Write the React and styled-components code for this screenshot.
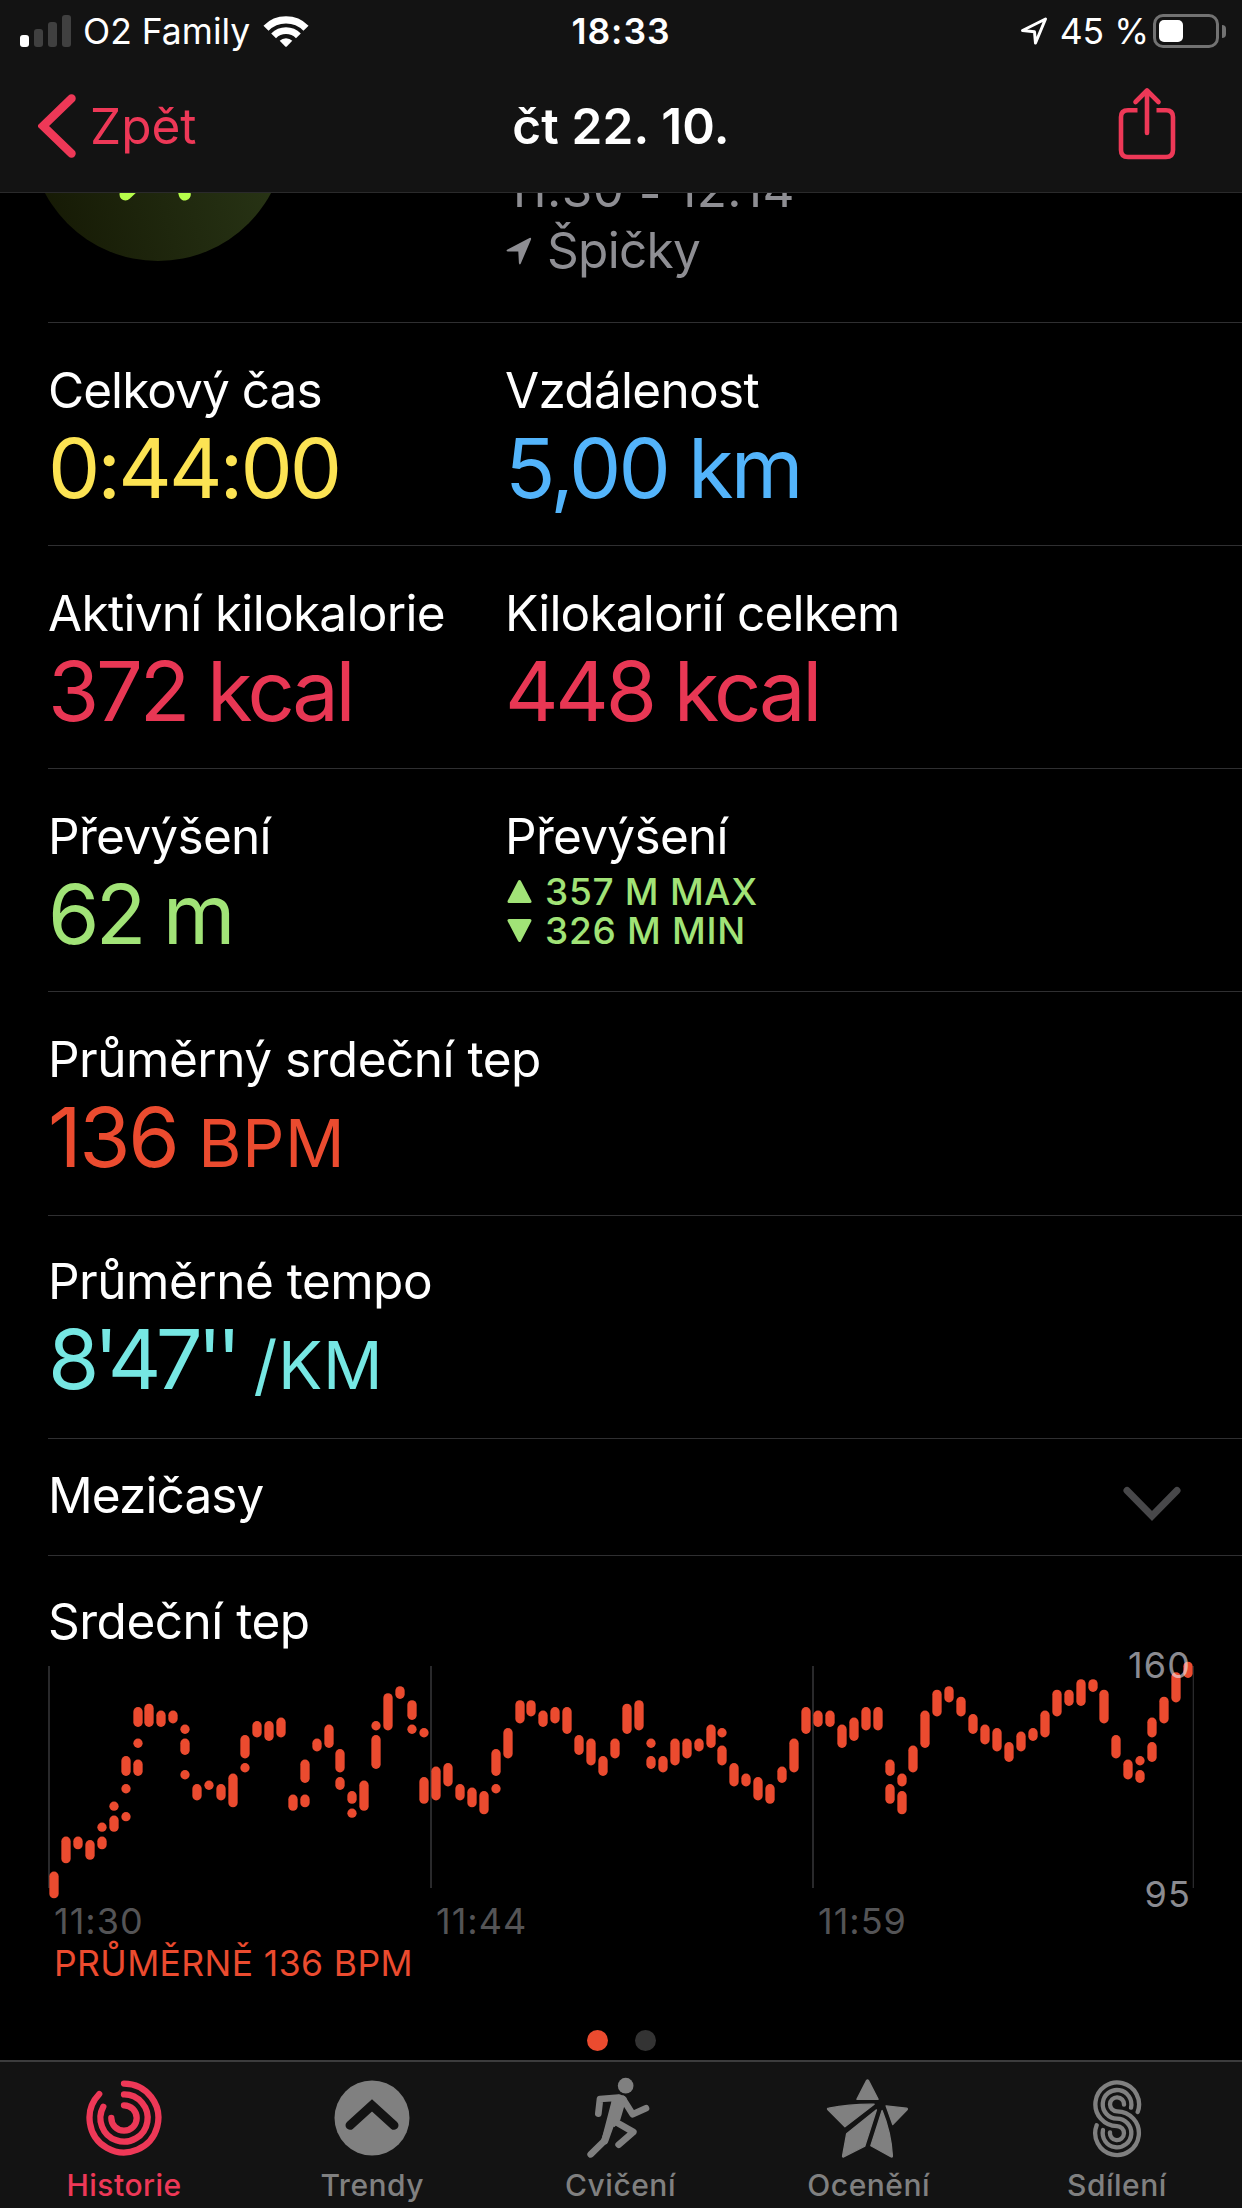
import styled, { createGlobalStyle } from "styled-components";

const HEART_RATE = [
  [[100, 95]],
  [[110, 105]],
  [[110, 109]],
  [[109, 106]],
  [[114, 114], [110, 109]],
  [[120, 120], [116, 114]],
  [[133, 130], [125, 125], [117, 117]],
  [[147, 144], [138, 138], [132, 130]],
  [[148, 144]],
  [[146, 144]],
  [[146, 145]],
  [[142, 142], [138, 136], [129, 129]],
  [[125, 123]],
  [[126, 126]],
  [[125, 123]],
  [[128, 121]],
  [[139, 135], [131, 131]],
  [[143, 141]],
  [[143, 140]],
  [[144, 141]],
  [[122, 120]],
  [[132, 128], [122, 121]],
  [[138, 137]],
  [[142, 138]],
  [[135, 131], [127, 126]],
  [[123, 122], [118, 118]],
  [[126, 120]],
  [[143, 143], [139, 132]],
  [[151, 143]],
  [[153, 152]],
  [[149, 146], [142, 142]],
  [[141, 141], [127, 122]],
  [[130, 123]],
  [[131, 127]],
  [[125, 123]],
  [[124, 121]],
  [[123, 119]],
  [[135, 130], [125, 125]],
  [[141, 135]],
  [[149, 145]],
  [[149, 147]],
  [[146, 144]],
  [[147, 145]],
  [[147, 142]],
  [[139, 136]],
  [[138, 133]],
  [[133, 130]],
  [[138, 135]],
  [[148, 142]],
  [[149, 143]],
  [[138, 138], [133, 132]],
  [[133, 131]],
  [[138, 133]],
  [[138, 135]],
  [[138, 137]],
  [[142, 138]],
  [[141, 141], [136, 133]],
  [[131, 127]],
  [[128, 127]],
  [[127, 123]],
  [[125, 122]],
  [[130, 128]],
  [[138, 131]],
  [[147, 142]],
  [[146, 144]],
  [[146, 144]],
  [[142, 138]],
  [[144, 140]],
  [[147, 143]],
  [[147, 143]],
  [[132, 130], [125, 122]],
  [[128, 127], [123, 119]],
  [[136, 131]],
  [[146, 138]],
  [[152, 147]],
  [[153, 151]],
  [[150, 147]],
  [[145, 142]],
  [[142, 139]],
  [[141, 137]],
  [[137, 134]],
  [[140, 137]],
  [[141, 140]],
  [[146, 141]],
  [[152, 147]],
  [[152, 150]],
  [[155, 150]],
  [[155, 154]],
  [[152, 145]],
  [[139, 135]],
  [[132, 129]],
  [[133, 133], [129, 128]],
  [[144, 141], [137, 134]],
  [[150, 145]],
  [[157, 151]],
  [[160, 158]],
];

export default function App() {
  return (
    <>
      <GlobalStyle />
      <Screen>
        <Header>
          <StatusBar />
          <NavBar>
            <BackButton>
              <svg width="38" height="64" viewBox="0 0 38 64">
                <path
                  d="M33.5 4.5L5 32l28.500 27.500"
                  fill="none"
                  stroke="currentColor"
                  strokeWidth="8.500"
                  strokeLinecap="round"
                />
              </svg>
              <span>Zpět</span>
            </BackButton>
            <NavTitle>čt 22. 10.</NavTitle>
            <ShareButton aria-label="Sdílet">
              <ShareIcon />
            </ShareButton>
          </NavBar>
        </Header>

        <Content>
          <Summary>
            <Badge>
              <svg width="256" height="256" viewBox="0 0 256 256">
                <path
                  d="M115 171L95.500 189.500M150 171L154.800 189.500"
                  stroke="#b6fd4b"
                  strokeWidth="12"
                  strokeLinecap="round"
                />
              </svg>
            </Badge>
            <SummaryText>
              <Time>
                11:30 <Dash>-</Dash> 12:14
              </Time>
              <Place>
                <svg width="26" height="28" viewBox="0 0 26 28">
                  <path
                    d="M1.500 12.600L23.500 1Q25.600 0.300 25 2.500L14.800 26.500Q13.500 28.600 12.900 26L12.300 14.600L2 14.600Q-0.600 14 1.500 12.600Z"
                    fill="currentColor"
                  />
                </svg>
                Špičky
              </Place>
            </SummaryText>
          </Summary>

          <Row>
            <Stat
              label="Celkový čas"
              labelSpacing="-0.95px"
              color="#fce353"
            >
              0:44:00
            </Stat>
            <Stat label="Vzdálenost" color="#53b4fb">
              5,00 km
            </Stat>
          </Row>
          <Row>
            <Stat label="Aktivní kilokalorie" color="#e83754" spacing="-3.3px">
              372 kcal
            </Stat>
            <Stat
              label="Kilokalorií celkem"
              labelSpacing="-0.8px"
              color="#e83754"
              spacing="-3.3px"
            >
              448 kcal
            </Stat>
          </Row>
          <Row>
            <Stat label="Převýšení" color="#a1e377" spacing="-3.6px">
              62 m
            </Stat>
            <Cell>
              <Label>Převýšení</Label>
              <Extremes>
                <li>
                  <Triangle />
                  357 M MAX
                </li>
                <li>
                  <Triangle $down />
                  326 M MIN
                </li>
              </Extremes>
            </Cell>
          </Row>
          <Row $height="224px">
            <Stat
              label="Průměrný srdeční tep"
              labelSpacing="-0.5px"
              color="#eb4b2f"
              spacing="-2.4px"
            >
              136 <Unit>BPM</Unit>
            </Stat>
          </Row>
          <Row $top="35px">
            <Stat
              label="Průměrné tempo"
              labelSpacing="-0.5px"
              color="#76e7e3"
              spacing="-5.6px"
            >
              8'47'' <Unit>/KM</Unit>
            </Stat>
          </Row>
          <SplitsRow>
            <Label $spacing="-0.9px">Mezičasy</Label>
            <Chevron width="58" height="36" viewBox="0 0 58 36">
              <path
                d="M4 4.500L29 30L54 4.500"
                fill="none"
                stroke="#48484a"
                strokeWidth="7"
                strokeLinecap="round"
              />
            </Chevron>
          </SplitsRow>

          <ChartSection>
            <Label $spacing="-0.5px">Srdeční tep</Label>
            <Chart>
              <HeartRateChart />
              <MaxLabel>160</MaxLabel>
              <MinLabel>95</MinLabel>
            </Chart>
            <TimeAxis>
              <span>11:30</span>
              <span>11:44</span>
              <span>11:59</span>
            </TimeAxis>
            <Average>PRŮMĚRNĚ 136 BPM</Average>
          </ChartSection>
          <Pager>
            <Dot $active />
            <Dot />
          </Pager>
        </Content>

        <TabBar>
          <Tab $active>
            <HistoryIcon />
            Historie
          </Tab>
          <Tab>
            <TrendsIcon />
            Trendy
          </Tab>
          <Tab>
            <WorkoutIcon />
            Cvičení
          </Tab>
          <Tab>
            <AwardsIcon />
            Ocenění
          </Tab>
          <Tab>
            <SharingIcon />
            Sdílení
          </Tab>
        </TabBar>
      </Screen>
    </>
  );
}

function StatusBar() {
  return (
    <StyledStatusBar>
      <StatusGroup>
        <Signal>
          <SignalBar $height="12px" $on />
          <SignalBar $height="18px" />
          <SignalBar $height="25px" />
          <SignalBar $height="32px" />
        </Signal>
        <Carrier>O2 Family</Carrier>
        <svg width="46" height="34" viewBox="0 0 46 34">
          <g fill="none" stroke="#fff">
            <path d="M3 14.200A28.300 28.300 0 0 1 43 14.200" strokeWidth="7.200" />
            <path d="M10.600 21.800A17.500 17.500 0 0 1 35.400 21.800" strokeWidth="6.800" />
          </g>
          <path
            d="M16.700 26.700A9 9 0 0 1 29.300 26.700L24 32.300Q23 33.300 22 32.300Z"
            fill="#fff"
          />
        </svg>
      </StatusGroup>
      <Clock>18:33</Clock>
      <StatusGroup $end>
        <svg width="30" height="30" viewBox="0 0 30 30">
          <path
            d="M3.500 14.500L26.500 3L16.500 27L15.500 15.800Z"
            fill="none"
            stroke="#fff"
            strokeWidth="3"
            strokeLinejoin="round"
          />
        </svg>
        <Percent>45 %</Percent>
        <Battery>
          <BatteryLevel />
        </Battery>
        <BatteryCap />
      </StatusGroup>
    </StyledStatusBar>
  );
}

function Stat({ label, labelSpacing, color, spacing, children }) {
  return (
    <Cell>
      <Label $spacing={labelSpacing}>{label}</Label>
      <Value $color={color} $spacing={spacing}>
        {children}
      </Value>
    </Cell>
  );
}

function Triangle({ $down }) {
  return (
    <svg width="25" height="25" viewBox="0 0 25 25">
      <path
        d={
          $down
            ? "M2 2.500H23L12.500 22.500Z"
            : "M12.500 2.500L23 22.500H2Z"
        }
        fill="currentColor"
        stroke="currentColor"
        strokeWidth="3"
        strokeLinejoin="round"
      />
    </svg>
  );
}

function HeartRateChart() {
  const getY = (bpm) => 6.3 + (160 - bpm) * 3.498;

  return (
    <svg width="1146" height="240" viewBox="0 0 1146 240">
      <g fill="#29292b">
        <rect x="0" y="6" width="2" height="222" />
        <rect x="382" y="6" width="2" height="222" />
        <rect x="764" y="6" width="2" height="222" />
        <rect x="1144.700" y="6" width="1.300" height="222" />
      </g>
      <g fill="#eb4b2f">
        {HEART_RATE.map((ranges, index) => {
          const x = 6 + index * 12 - Math.floor((index + 8) / 16);
          return ranges.map(([high, low]) => (
            <rect
              key={`${index}-${high}`}
              x={x - 4.65}
              y={getY(high) - 4.65}
              width="9.3"
              height={getY(low) - getY(high) + 9.3}
              rx="4.65"
            />
          ));
        })}
      </g>
    </svg>
  );
}

function ShareIcon() {
  return (
    <svg width="58" height="74" viewBox="0 0 58 74">
      <g fill="none" stroke="currentColor" strokeWidth="4.600" strokeLinecap="round">
        <path d="M29 4V46M17.500 15L29 3.500L40.500 15" strokeLinejoin="round" />
        <path
          d="M19.500 23.200H10Q3 23.200 3 30V63Q3 70 10 70H48Q55 70 55 63V30Q55 23.200 48 23.200H38.500"
          strokeLinecap="butt"
        />
      </g>
    </svg>
  );
}

function HistoryIcon() {
  return (
    <svg width="76" height="76" viewBox="-38 -38 76 76">
      <g fill="none" stroke="currentColor" strokeWidth="6.300" strokeLinecap="round">
        <path d="M0 -34.400A34.400 34.400 0 1 1 -24.800 -23.900" />
        <path d="M0 -23.600A23.600 23.600 0 1 1 -20.700 -11.300" />
        <path d="M0 -12.700A12.700 12.700 0 1 1 -12.700 0" />
      </g>
    </svg>
  );
}

function TrendsIcon() {
  return (
    <svg width="76" height="76" viewBox="-38 -38 76 76">
      <circle r="37.500" fill="currentColor" />
      <path
        d="M-22 7.300L0 -12.700L22 7.300"
        fill="none"
        stroke="#131313"
        strokeWidth="9"
        strokeLinecap="round"
      />
    </svg>
  );
}

function WorkoutIcon() {
  return (
    <svg width="68" height="82" viewBox="170 199 204 246">
      <circle cx="289" cy="225" r="23.500" fill="currentColor" />
      <path
        d="M245 258L268 252Q284 252 292 262L284 290L273 327L256 349L240 345L247 274Z"
        fill="currentColor"
      />
      <g
        fill="none"
        stroke="currentColor"
        strokeWidth="20"
        strokeLinecap="round"
        strokeLinejoin="round"
      >
        <path d="M207 309L212 265L268 261" />
        <path d="M281 265L310 311L350 293" />
        <path d="M263 336L312 364L268 402" />
        <path d="M256 275L226 390L184 431" />
        <path d="M244 340L226 390" strokeWidth="22" />
      </g>
    </svg>
  );
}

function AwardsIcon() {
  return (
    <svg width="86" height="81" viewBox="886 206 259 244">
      <g
        fill="currentColor"
        stroke="currentColor"
        strokeWidth="4"
        strokeLinejoin="round"
      >
        <path d="M1008 214Q1011 210 1014 214L1043 270L979 270Z" />
        <path d="M892 302Q888 298 894 297Q960 284 1031 285L943 353Z" />
        <path d="M1038 302L1003 411L939 444Q935 445 936 440L948 374Z" />
        <path d="M1055 304Q1082 370 1086 440Q1086 446 1081 443L1021 410Z" />
        <path d="M1067 290L1128 297Q1133 298 1130 302L1087 346Z" />
      </g>
    </svg>
  );
}

function SharingIcon() {
  return (
    <svg width="50" height="79" viewBox="456 295 150 237">
      <g fill="none" stroke="currentColor" strokeWidth="13" strokeLinecap="round">
        <path d="M593 394A65.500 65.500 0 1 0 531 436.500A21 21 0 1 1 510 455" />
        <path d="M573 381A43 43 0 1 0 531 414A43 43 0 1 1 489 448" />
        <path d="M552 372A21 21 0 1 0 531 392A65.500 65.500 0 1 1 470 434" />
      </g>
    </svg>
  );
}

const GlobalStyle = createGlobalStyle`
  * {
    box-sizing: border-box;
  }

  body {
    margin: 0;
    background: #000;
    color: #fff;
    font-family: Inter, "Liberation Sans", sans-serif;
  }

  svg {
    display: block;
    flex-shrink: 0;
  }
`;

const Screen = styled.div`
  display: flex;
  flex-direction: column;
  width: 1242px;
  height: 2208px;
  overflow: hidden;
  background: #000;
`;

const Header = styled.header`
  height: 193px;
  background: #131313;
  border-bottom: 1px solid #2a2a2b;
`;

const StyledStatusBar = styled.div`
  display: grid;
  grid-template-columns: 1fr auto 1fr;
  align-items: center;
  height: 60px;
  padding: 0 16px;
  font-size: 35.5px;
  line-height: 60px;
`;

const StatusGroup = styled.div`
  display: flex;
  align-items: center;
  justify-content: ${({ $end }) => ($end ? "flex-end" : "flex-start")};
`;

const Signal = styled.div`
  display: flex;
  align-items: flex-end;
  gap: 5px;
  height: 32px;
  margin-left: 4px;
`;

const SignalBar = styled.span`
  width: 9px;
  height: ${({ $height }) => $height};
  border-radius: 3px;
  background: ${({ $on }) => ($on ? "#fff" : "#404040")};
`;

const Carrier = styled.span`
  margin: 2px 13px 0 12px;
`;

const Clock = styled.span`
  margin-top: 2px;
  font-weight: 600;
  letter-spacing: 1px;
`;

const Percent = styled.span`
  margin: 2px 4px 0 11px;
`;

const Battery = styled.div`
  width: 66px;
  height: 34px;
  padding: 3px;
  border: 3px solid #727272;
  border-radius: 10px;
`;

const BatteryLevel = styled.div`
  width: 24px;
  height: 22px;
  border-radius: 5px;
  background: #fff;
`;

const BatteryCap = styled.div`
  width: 4px;
  height: 13px;
  margin-left: 3px;
  border-radius: 0 4px 4px 0;
  background: #727272;
`;

const NavBar = styled.nav`
  display: grid;
  grid-template-columns: 1fr auto 1fr;
  align-items: center;
  height: 132px;
  padding: 0 38px;
  font-size: 49.5px;
  line-height: 60px;
`;

const BackButton = styled.button`
  display: flex;
  align-items: center;
  gap: 14px;
  padding: 0;
  border: none;
  background: none;
  color: #ee3857;
  font: inherit;
`;

const NavTitle = styled.h1`
  margin: 0;
  font-size: 49.5px;
  font-weight: 600;
  letter-spacing: 0.2px;
`;

const ShareButton = styled.button`
  justify-self: end;
  margin: 0 28px 4px 0;
  padding: 0;
  border: none;
  background: none;
  color: #ee3857;
`;

const Content = styled.main`
  display: flex;
  flex-direction: column;
  height: 1867px;
  overflow: hidden;
`;

const Summary = styled.section`
  display: flex;
  align-items: flex-end;
  flex-shrink: 0;
  height: 130px;
  margin-left: 48px;
  border-bottom: 1px solid #2f2f31;
`;

const Badge = styled.div`
  width: 256px;
  height: 256px;
  margin: 0 220px 61px -18px;
  border-radius: 50%;
  background: linear-gradient(75deg, #141703, #2c3a19);
`;

const SummaryText = styled.div`
  display: flex;
  flex-direction: column;
  margin-bottom: 41px;
  color: #8e8e93;
  font-size: 49.5px;
  line-height: 61px;
`;

const Time = styled.span`
  letter-spacing: 0.4px;
`;

const Dash = styled.span`
  line-height: 0;
  vertical-align: -4px;
`;

const Place = styled.div`
  display: flex;
  align-items: center;
  gap: 15px;
  letter-spacing: -0.7px;
`;

const Row = styled.section`
  display: grid;
  grid-template-columns: 457px 1fr;
  flex-shrink: 0;
  height: ${({ $height }) => $height || "223px"};
  margin-left: 48px;
  padding-top: ${({ $top }) => $top || "37px"};
  border-bottom: 1px solid #2f2f31;
  white-space: nowrap;
`;

const Cell = styled.div`
  min-width: 0;
`;

const Label = styled.h2`
  margin: 0;
  font-size: 49.5px;
  font-weight: 400;
  line-height: 60px;
  letter-spacing: ${({ $spacing }) => $spacing || "-0.7px"};
`;

const Value = styled.p`
  margin: 3px 0 0;
  color: ${({ $color }) => $color};
  font-size: 83px;
  line-height: 90px;
  letter-spacing: ${({ $spacing }) => $spacing || "-3px"};
`;

const Unit = styled.span`
  font-size: 66px;
  letter-spacing: 0.7px;
`;

const Extremes = styled.ul`
  margin: 6px 0 0;
  padding: 0 0 0 2px;
  list-style: none;
  color: #a1e377;
  font-size: 37px;
  font-weight: 450;
  line-height: 39px;
  letter-spacing: 0.7px;

  li {
    display: flex;
    align-items: center;
    gap: 13px;
  }
`;

const SplitsRow = styled.section`
  display: flex;
  align-items: center;
  justify-content: space-between;
  flex-shrink: 0;
  height: 117px;
  margin-left: 48px;
  padding: 0 61px 5px 0;
  border-bottom: 1px solid #2f2f31;
`;

const Chevron = styled.svg`
  margin-top: 18px;
`;

const ChartSection = styled.section`
  padding: 35px 48px 0;
`;

const Chart = styled.div`
  position: relative;
  height: 240px;
  margin-top: 9px;
`;

const ChartLabel = styled.span`
  position: absolute;
  right: 3px;
  color: rgba(235, 235, 245, 0.6);
  font-size: 36px;
  font-weight: 400;
  line-height: 40px;
  letter-spacing: 1.1px;
`;

const MaxLabel = styled(ChartLabel)`
  top: -15px;
`;

const MinLabel = styled(ChartLabel)`
  top: 214px;
`;

const TimeAxis = styled.div`
  display: grid;
  grid-template-columns: repeat(3, 382px);
  padding-left: 6px;
  color: #545456;
  font-size: 36px;
  font-weight: 400;
  line-height: 42px;
  letter-spacing: 1px;
`;

const Average = styled.p`
  margin: 1px 0 0;
  padding-left: 6px;
  color: #eb4b2f;
  font-size: 35.5px;
  line-height: 42px;
  letter-spacing: 0.4px;
`;

const Pager = styled.div`
  display: flex;
  justify-content: center;
  gap: 27px;
  margin-top: auto;
  padding-bottom: 9px;
`;

const Dot = styled.span`
  width: 21px;
  height: 21px;
  border-radius: 50%;
  background: ${({ $active }) => ($active ? "#eb4b2f" : "#333")};
`;

const TabBar = styled.nav`
  display: grid;
  grid-template-columns: repeat(5, 1fr);
  height: 148px;
  padding-right: 1px;
  border-top: 2px solid #3c3c3d;
  background: #131313;
`;

const Tab = styled.a`
  display: grid;
  grid-template-rows: 112px 22px;
  justify-items: center;
  align-items: center;
  align-content: start;
  color: ${({ $active }) => ($active ? "#ee3857" : "#808080")};
  font-size: 30px;
  font-weight: 450;
  line-height: 22px;
  letter-spacing: 0.5px;
`;
